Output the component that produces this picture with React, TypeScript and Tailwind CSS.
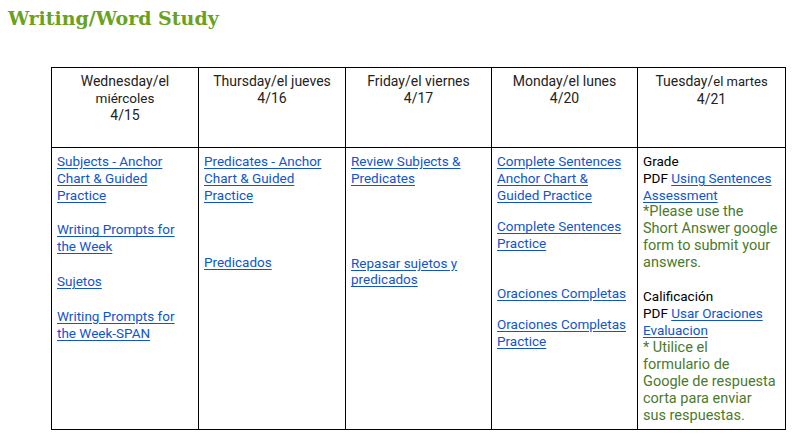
import type { ReactNode } from "react";

const LINK = "text-[#1155cc] underline underline-offset-2";
const GREEN = "text-[#4a7a2c] text-[14.5px] leading-[17px] whitespace-nowrap";

function A({ children }: { children: ReactNode }) {
  return <a className={LINK}>{children}</a>;
}

function Head({ children }: { children: ReactNode }) {
  return (
    <th className="border border-black align-top text-center font-normal text-[14px] text-[#222] px-[5px] pt-[5px] h-[80px]">
      {children}
    </th>
  );
}

function Cell({ children }: { children: ReactNode }) {
  return (
    <td className="border border-black align-top px-[5px] pt-[5px] h-[282px]">{children}</td>
  );
}

export default function App() {
  return (
    <div className="w-[794px] h-[443px] bg-white overflow-hidden font-['Roboto',sans-serif] text-[13.5px] leading-[16.8px]">
      <h1 className="pl-[8px] pt-[5px] font-['DejaVu_Serif',serif] font-bold text-[19px] leading-[26px] text-[#6aa121]">
        Writing/Word Study
      </h1>
      <table className="ml-[51px] mt-[36px] border-collapse table-fixed w-[734px]">
        <colgroup>
          <col className="w-[147px]" />
          <col className="w-[147px]" />
          <col className="w-[146px]" />
          <col className="w-[146px]" />
          <col className="w-[148px]" />
        </colgroup>
        <thead>
          <tr>
            <Head>
              Wednesday/el
              <br />
              <span className="text-[13.5px]">miércoles</span>
              <br />
              4/15
            </Head>
            <Head>
              Thursday/el jueves
              <br />
              4/16
            </Head>
            <Head>
              Friday/el viernes
              <br />
              4/17
            </Head>
            <Head>
              Monday/el lunes
              <br />
              4/20
            </Head>
            <Head>
              Tuesday/<span className="text-[13px]">el martes</span>
              <br />
              4/21
            </Head>
          </tr>
        </thead>
        <tbody>
          <tr>
            <Cell>
              <A>Subjects - Anchor Chart &amp; Guided Practice</A>
              <div className="mt-[18px]">
                <A>Writing Prompts for the Week</A>
              </div>
              <div className="mt-[18px]">
                <A>Sujetos</A>
              </div>
              <div className="mt-[18px]">
                <A>Writing Prompts for the Week-SPAN</A>
              </div>
            </Cell>
            <Cell>
              <A>Predicates - Anchor Chart &amp; Guided Practice</A>
              <div className="mt-[51px]">
                <A>Predicados</A>
              </div>
            </Cell>
            <Cell>
              <A>Review Subjects &amp; Predicates</A>
              <div className="mt-[68px]">
                <A>Repasar sujetos y predicados</A>
              </div>
            </Cell>
            <Cell>
              <A>Complete Sentences Anchor Chart &amp; Guided Practice</A>
              <div className="mt-[15px]">
                <A>Complete Sentences Practice</A>
              </div>
              <div className="mt-[33px]">
                <A>Oraciones Completas</A>
              </div>
              <div className="mt-[14px]">
                <A>Oraciones Completas Practice</A>
              </div>
            </Cell>
            <Cell>
              <div className="text-black">Grade</div>
              <div className="text-black">
                PDF <A>Using Sentences Assessment</A>
              </div>
              <div className={GREEN}>
                *Please use the
                <br />
                Short Answer google
                <br />
                form to submit your
                <br />
                answers.
              </div>
              <div className="mt-[17px] text-black">Calificación</div>
              <div className="text-black">
                PDF <A>Usar Oraciones Evaluacion</A>
              </div>
              <div className={GREEN}>
                * Utilice el
                <br />
                formulario de
                <br />
                Google de respuesta
                <br />
                corta para enviar
                <br />
                sus respuestas.
              </div>
            </Cell>
          </tr>
        </tbody>
      </table>
    </div>
  );
}
